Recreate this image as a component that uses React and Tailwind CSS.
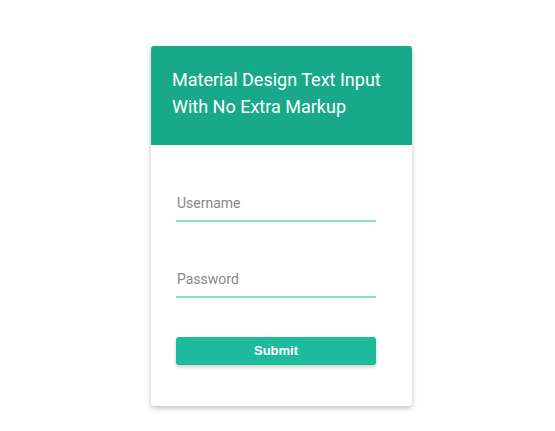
function Field({ type, placeholder, className }) {
  return (
    <div className={"w-[200px] " + className}>
      <input
        type={type}
        placeholder={placeholder}
        className="block h-[29px] w-full bg-transparent px-[1px] pb-[5px] text-[14px] text-[#555] outline-none placeholder:text-[#888]"
      />
      <div className="h-[2px] w-full bg-[#86e0cb]" />
    </div>
  );
}

export default function App() {
  return (
    <div className="min-h-[431px] w-[555px] bg-[#fefefe] pt-[46px]" style={{ fontFamily: "Roboto, 'Liberation Sans', sans-serif" }}>
      <div className="ml-[151px] w-[261px] rounded-[3px] bg-white shadow-[0_2px_5px_rgba(0,0,0,0.25)]">
        <div className="h-[99px] rounded-t-[3px] bg-[#17a98a] pl-[21px] pt-[20px] text-[18px] leading-[27px] text-white">
          Material Design Text Input<br />With No Extra Markup
        </div>
        <div className="px-[25px] pt-[46px] pb-[41px]">
          <Field type="text" placeholder="Username" className="" />
          <Field type="password" placeholder="Password" className="mt-[45px]" />
          <button
            className="mt-[39px] block h-[28px] w-[200px] rounded-[3px] bg-[#1dbb9b] text-[13px] font-semibold text-white shadow-[0_2px_4px_rgba(0,0,0,0.2)]"
            style={{ fontFamily: "'Liberation Sans', Arial, sans-serif" }}
          >
            Submit
          </button>
        </div>
      </div>
    </div>
  );
}
